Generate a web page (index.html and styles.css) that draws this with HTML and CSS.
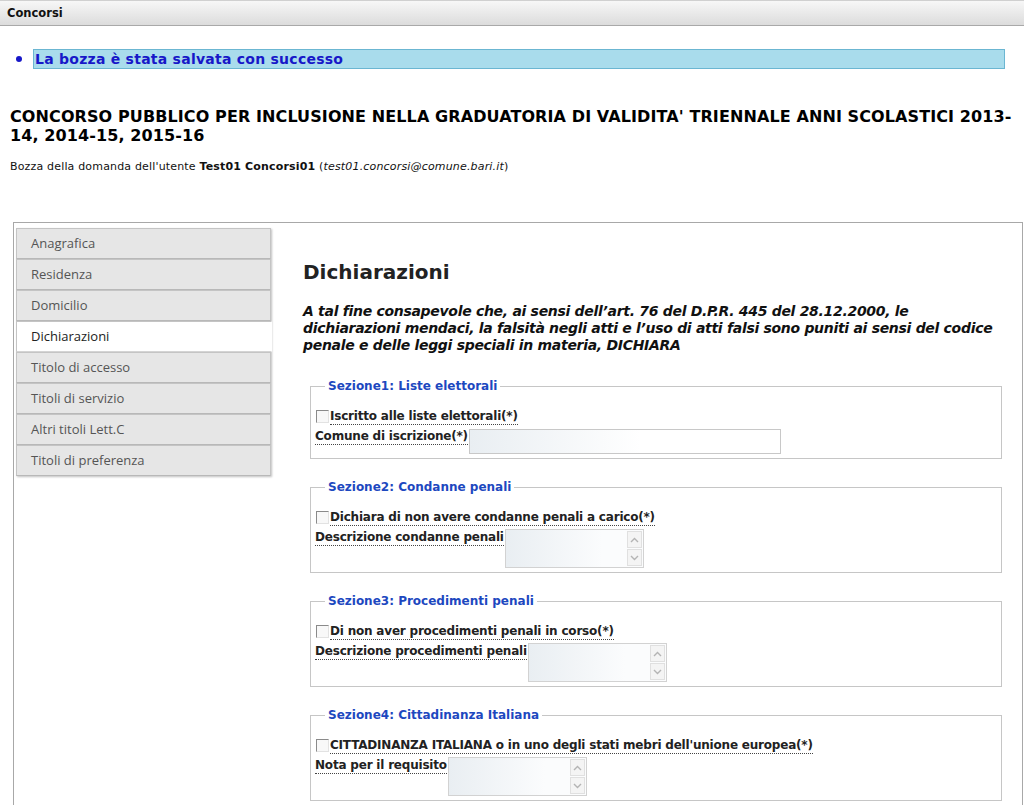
FILE: index.html
```html
<!DOCTYPE html>
<html lang="it">

<head>
    <meta charset="UTF-8">
    <meta name="viewport" content="width=device-width, initial-scale=1.0">
    <title>Concorsi</title>
    <link rel="stylesheet" href="styles.css">
</head>

<body>
    <div class="topbar">Concorsi</div>

    <ul class="messages">
        <li>La bozza è stata salvata con successo</li>
    </ul>

    <h1 class="title">CONCORSO PUBBLICO PER INCLUSIONE NELLA GRADUATORIA DI VALIDITA' TRIENNALE ANNI SCOLASTICI 2013-14, 2014-15, 2015-16</h1>
    <p class="owner">Bozza della domanda dell'utente <b>Test01 Concorsi01</b> (<i>test01.concorsi@comune.bari.it</i>)</p>

    <div class="wizard">
        <ul class="steps">
            <li><a href="javascript:;">Anagrafica</a></li>
            <li><a href="javascript:;">Residenza</a></li>
            <li><a href="javascript:;">Domicilio</a></li>
            <li class="active"><a href="javascript:;">Dichiarazioni</a></li>
            <li><a href="javascript:;">Titolo di accesso</a></li>
            <li><a href="javascript:;">Titoli di servizio</a></li>
            <li><a href="javascript:;">Altri titoli Lett.C</a></li>
            <li><a href="javascript:;">Titoli di preferenza</a></li>
        </ul>

        <div class="step_content">
            <h2>Dichiarazioni</h2>
            <p class="premise">A tal fine consapevole che, ai sensi dell’art. 76 del D.P.R. 445 del 28.12.2000, le dichiarazioni mendaci, la falsità negli atti e l’uso di atti falsi sono puniti ai sensi del codice penale e delle leggi speciali in materia, DICHIARA</p>

            <fieldset>
                <legend>Sezione1: Liste elettorali</legend>
                <div class="row row_check">
                    <input type="checkbox" id="liste">
                    <label for="liste">Iscritto alle liste elettorali(*)</label>
                </div>
                <div class="row">
                    <label for="comune">Comune di iscrizione(*)</label>
                    <input type="text" id="comune" class="text_input">
                </div>
            </fieldset>

            <fieldset>
                <legend>Sezione2: Condanne penali</legend>
                <div class="row row_check">
                    <input type="checkbox" id="condanne">
                    <label for="condanne">Dichiara di non avere condanne penali a carico(*)</label>
                </div>
                <div class="row">
                    <label for="desc_condanne">Descrizione condanne penali</label>
                    <div class="area">
                        <textarea id="desc_condanne"></textarea>
                        <div class="scroll">
                            <span><svg width="9" height="6" viewBox="0 0 9 6"><path d="M1 5 L4.5 1.5 L8 5" fill="none" stroke="#b4b4b4" stroke-width="1.4"/></svg></span>
                            <span><svg width="9" height="6" viewBox="0 0 9 6"><path d="M1 1 L4.5 4.5 L8 1" fill="none" stroke="#b4b4b4" stroke-width="1.4"/></svg></span>
                        </div>
                    </div>
                </div>
            </fieldset>

            <fieldset>
                <legend>Sezione3: Procedimenti penali</legend>
                <div class="row row_check">
                    <input type="checkbox" id="procedimenti">
                    <label for="procedimenti">Di non aver procedimenti penali in corso(*)</label>
                </div>
                <div class="row">
                    <label for="desc_procedimenti">Descrizione procedimenti penali</label>
                    <div class="area">
                        <textarea id="desc_procedimenti"></textarea>
                        <div class="scroll">
                            <span><svg width="9" height="6" viewBox="0 0 9 6"><path d="M1 5 L4.5 1.5 L8 5" fill="none" stroke="#b4b4b4" stroke-width="1.4"/></svg></span>
                            <span><svg width="9" height="6" viewBox="0 0 9 6"><path d="M1 1 L4.5 4.5 L8 1" fill="none" stroke="#b4b4b4" stroke-width="1.4"/></svg></span>
                        </div>
                    </div>
                </div>
            </fieldset>

            <fieldset>
                <legend>Sezione4: Cittadinanza Italiana</legend>
                <div class="row row_check">
                    <input type="checkbox" id="cittadinanza">
                    <label for="cittadinanza">CITTADINANZA ITALIANA o in uno degli stati mebri dell'unione europea(*)</label>
                </div>
                <div class="row">
                    <label for="nota">Nota per il requisito</label>
                    <div class="area">
                        <textarea id="nota"></textarea>
                        <div class="scroll">
                            <span><svg width="9" height="6" viewBox="0 0 9 6"><path d="M1 5 L4.5 1.5 L8 5" fill="none" stroke="#b4b4b4" stroke-width="1.4"/></svg></span>
                            <span><svg width="9" height="6" viewBox="0 0 9 6"><path d="M1 1 L4.5 4.5 L8 1" fill="none" stroke="#b4b4b4" stroke-width="1.4"/></svg></span>
                        </div>
                    </div>
                </div>
            </fieldset>
        </div>
    </div>
</body>

</html>
```

FILE: styles.css
```css
html,body,ul,li,p,h1,h2,div,fieldset,legend,input,textarea,label {
    padding: 0;
    margin: 0;
    box-sizing: border-box;
}
body {
    font-family: "DejaVu Sans", Verdana, sans-serif;
    color: #111;
    background: #fff;
}
ul {
    list-style: none;
}
a {
    text-decoration: none;
}

/* barra del titolo */
.topbar {
    height: 26px;
    line-height: 25px;
    padding-left: 7px;
    font-size: 11.5px;
    font-weight: bold;
    color: #111;
    background: linear-gradient(#f7f7f7, #dcdcdc);
    border-top: 1px solid #d0d0d0;
    border-bottom: 1px solid #a9a9a9;
}

/* messaggio di conferma */
.messages {
    margin: 23px 19px 0 0;
    padding-left: 33px;
    color: #1717c8;
}
.messages > li {
    height: 20px;
    line-height: 18px;
    padding-left: 1px;
    font-size: 14px;
    font-weight: bold;
    letter-spacing: .25px;
    background-color: #a9dcec;
    border: 1px solid #6bb6d2;
}
.messages > li::before {
    content: "";
    display: inline-block;
    width: 6px;
    height: 6px;
    border-radius: 3px;
    background-color: #1717c8;
    margin: 0 13px 2px -19px;
    vertical-align: middle;
}

.title {
    margin: 38px 0 0 10px;
    font-size: 16px;
    line-height: 19px;
    font-weight: bold;
    letter-spacing: .1px;
    color: #000;
}
.owner {
    margin: 15px 0 0 10px;
    font-size: 11px;
    line-height: 14px;
    letter-spacing: .17px;
    color: #111;
}

/* contenitore del modulo */
.wizard {
    display: flex;
    align-items: flex-start;
    margin: 48px 1px 0 13px;
    padding: 5px 20px 0 2px;
    border: 1px solid #a8a8a8;
    border-bottom: none;
}
.steps {
    flex: none;
    width: 255px;
    font-family: "Open Sans", "DejaVu Sans", sans-serif;
    font-size: 13px;
    box-shadow: 1px 1px 2px rgba(0, 0, 0, .25);
}
.steps > li {
    height: 31px;
    background-color: #e6e6e6;
    border: 1px solid #c4c4c4;
    border-bottom-color: #b8b8b8;
}
.steps > li a {
    display: block;
    line-height: 29px;
    padding-left: 14px;
    color: #555;
}
.steps > li.active {
    background-color: #fff;
    border-right-color: #fff;
    border-bottom-color: #d4d4d4;
    margin-right: -1px;
}
.steps > li.active a {
    color: #222;
}

.step_content {
    flex: 1;
    padding: 32px 0 0 32px;
}
.step_content h2 {
    font-size: 20px;
    line-height: 24px;
    font-weight: bold;
    color: #222;
    margin-bottom: 19px;
}
.premise {
    font-size: 14px;
    line-height: 17px;
    font-weight: bold;
    font-style: italic;
    letter-spacing: -.3px;
    color: #111;
    margin: 0 -6px 24px 0;
}

fieldset {
    margin: 0 0 20px 7px;
    padding: 14px 4px 4px 4px;
    border: 1px solid #c6c6c6;
}
legend {
    margin-left: 10px;
    padding: 0 3px;
    font-size: 12px;
    line-height: 16px;
    font-weight: bold;
    color: #1d48bf;
}
.row {
    display: flex;
    align-items: flex-start;
}
.row_check {
    height: 17px;
    margin-bottom: 3px;
    align-items: center;
}
.row label {
    font-size: 12px;
    line-height: 15px;
    font-weight: bold;
    letter-spacing: -.2px;
    color: #222;
    border-bottom: 1px dotted #444;
    margin-top: 1px;
}
.row_check label {
    margin-top: 0;
}
input[type=checkbox] {
    -webkit-appearance: none;
    appearance: none;
    flex: none;
    width: 13px;
    height: 13px;
    margin: 0 1px 0 1px;
    border: 1px solid;
    border-color: #8a8a8a #e2e2e2 #e2e2e2 #8a8a8a;
    background: #f8f8f8;
}
.text_input {
    width: 312px;
    height: 25px;
    margin: 1px 0 0 1px;
    border: 1px solid #c8c8c8;
    background: linear-gradient(to right, #e9eef2, #fff 55%);
}

/* area di testo con barra di scorrimento */
.area {
    display: flex;
    width: 139px;
    height: 39px;
    margin-left: 1px;
    border: 1px solid #d2d2d2;
    background: linear-gradient(to right, #e9eef2, #fbfcfd 70%);
}
.area textarea {
    flex: 1;
    border: none;
    background: transparent;
    resize: none;
    outline: none;
}
.scroll {
    flex: none;
    width: 17px;
    display: flex;
    flex-direction: column;
    justify-content: space-between;
    padding: 1px;
}
.scroll span {
    display: flex;
    align-items: center;
    justify-content: center;
    height: 15px;
    background: #f4f4f4;
    border: 1px solid #e0e0e0;
}
```
